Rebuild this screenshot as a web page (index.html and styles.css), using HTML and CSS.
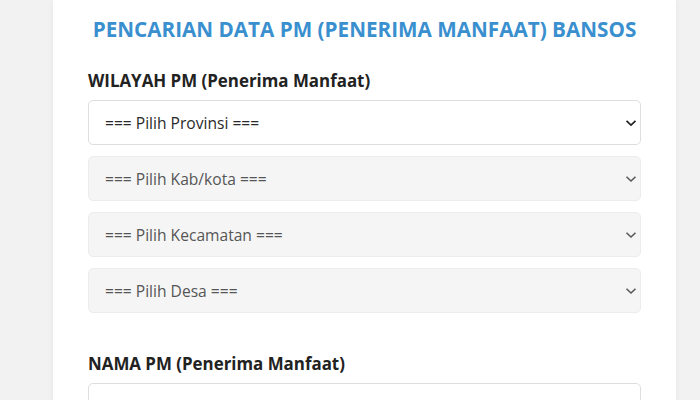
FILE: index.html
```html
<!DOCTYPE html>
<html lang="id">
<head>
<meta charset="utf-8">
<title>Pencarian Data PM</title>
<link rel="stylesheet" href="styles.css">
</head>
<body>
<main class="card">
  <h1 class="title">PENCARIAN DATA PM (PENERIMA MANFAAT) BANSOS</h1>
  <section class="group">
    <h2 class="label">WILAYAH PM (Penerima Manfaat)</h2>
    <div class="selects">
      <div class="select">
        <span>=== Pilih Provinsi ===</span>
        <svg class="chev" viewBox="0 0 12 8" width="12" height="8"><path d="M1.5 1.8 L6 6 L10.5 1.8" fill="none" stroke="#222" stroke-width="1.7"/></svg>
      </div>
      <div class="select disabled">
        <span>=== Pilih Kab/kota ===</span>
        <svg class="chev" viewBox="0 0 12 8" width="12" height="8"><path d="M1.5 1.8 L6 6 L10.5 1.8" fill="none" stroke="#555" stroke-width="1.5"/></svg>
      </div>
      <div class="select disabled">
        <span>=== Pilih Kecamatan ===</span>
        <svg class="chev" viewBox="0 0 12 8" width="12" height="8"><path d="M1.5 1.8 L6 6 L10.5 1.8" fill="none" stroke="#555" stroke-width="1.5"/></svg>
      </div>
      <div class="select disabled">
        <span>=== Pilih Desa ===</span>
        <svg class="chev" viewBox="0 0 12 8" width="12" height="8"><path d="M1.5 1.8 L6 6 L10.5 1.8" fill="none" stroke="#555" stroke-width="1.5"/></svg>
      </div>
    </div>
  </section>
  <section class="group name">
    <h2 class="label">NAMA PM (Penerima Manfaat)</h2>
    <div class="input"></div>
  </section>
</main>
</body>
</html>
```
FILE: styles.css
```css
html, body {
  margin: 0;
  padding: 0;
}
body {
  background: #f2f2f2;
  font-family: "Open Sans", "Noto Sans", sans-serif;
  padding-left: 53px;
  height: 400px;
  overflow: hidden;
}
.card {
  width: 553px;
  background: #fff;
  padding: 15px 35px 40px;
  box-shadow: 0 0 6px rgba(0,0,0,0.06);
  min-height: 400px;
}
.title {
  margin: 0;
  font-size: 20.7px;
  line-height: 28px;
  font-weight: 700;
  color: #3a8fcf;
  text-align: center;
}
.group {
  margin-top: 26px;
}
.group.name {
  margin-top: 39px;
}
.label {
  margin: 0 0 7px;
  font-size: 16.9px;
  line-height: 24px;
  font-weight: 700;
  color: #222;
}
.selects {
  display: flex;
  flex-direction: column;
  gap: 11px;
}
.select {
  height: 43px;
  border: 1px solid #dedede;
  border-radius: 5px;
  background: #fff;
  display: flex;
  align-items: center;
  justify-content: space-between;
  padding: 0 3px 0 16px;
  font-size: 15.6px;
  color: #2a2a2a;
}
.select.disabled {
  background: #f5f5f5;
  border-color: #ececec;
  color: #555;
}
.chev {
  display: block;
}
.input {
  height: 43px;
  border: 1px solid #dedede;
  border-radius: 5px;
  background: #fff;
}
```
